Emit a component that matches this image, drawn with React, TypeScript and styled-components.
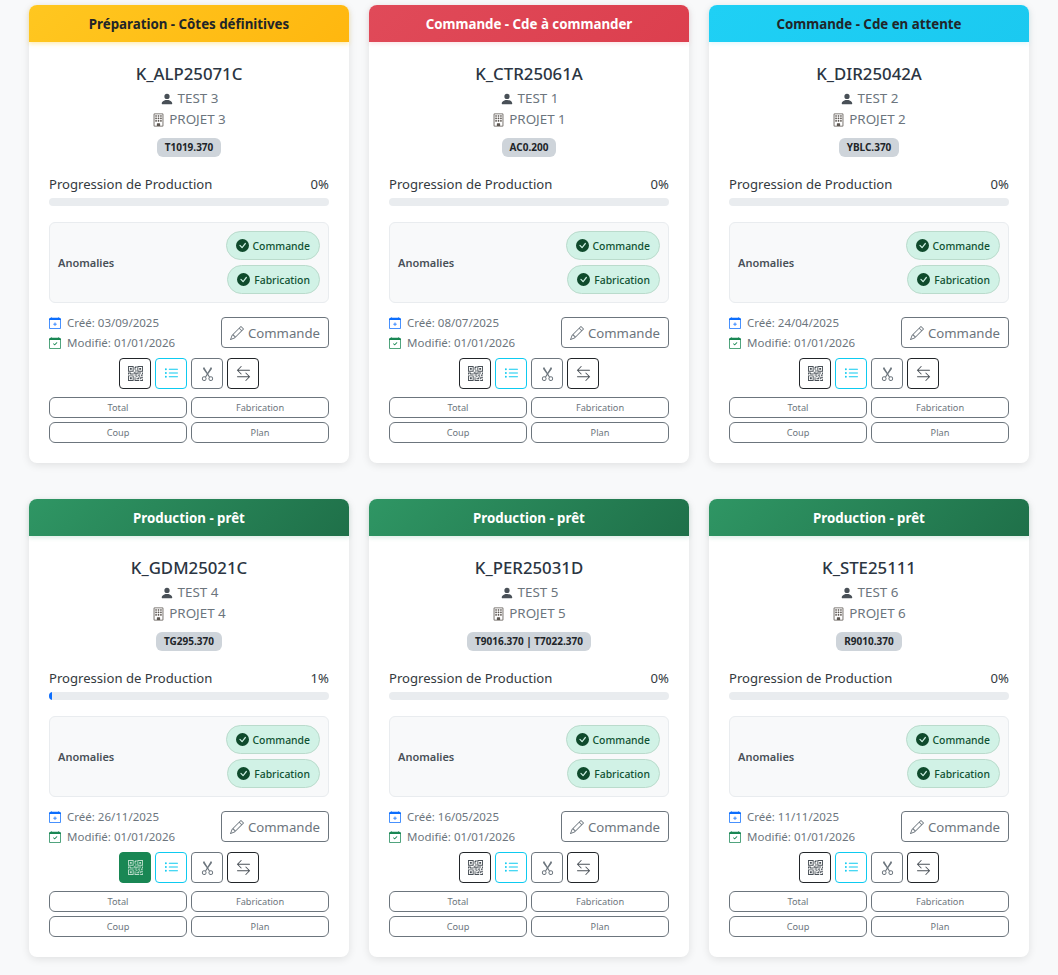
import React from "react";
import styled, { createGlobalStyle } from "styled-components";
import {
  BsPersonFill,
  BsBuilding,
  BsCheckCircleFill,
  BsCalendarPlus,
  BsCalendarCheck,
  BsPencil,
  BsQrCode,
  BsListUl,
  BsScissors,
  BsArrowLeftRight,
} from "react-icons/bs";

const Global = createGlobalStyle`
  html, body { margin: 0; padding: 0; background: #f8f9fa; }
  body { font-family: "Noto Sans", "Open Sans", sans-serif; color: #212529; }
  * { box-sizing: border-box; }
`;

const Page = styled.div`
  width: 1058px;
  height: 975px;
  overflow: hidden;
  padding: 5px 29px 0;
  display: grid;
  grid-template-columns: repeat(3, 320px);
  grid-auto-rows: 458px;
  column-gap: 20px;
  row-gap: 36px;
`;

const Card = styled.div`
  background: #fff;
  border-radius: 8px;
  box-shadow: 0 2px 8px rgba(0, 0, 0, 0.1);
  display: flex;
  flex-direction: column;
`;

type Tone = "warning" | "danger" | "info" | "success";

const tones: Record<Tone, { bg: string; fg: string; glow: string }> = {
  warning: { bg: "linear-gradient(135deg, #ffc720, #ffb70f)", fg: "#212529", glow: "rgba(255,193,7,.3)" },
  danger: { bg: "linear-gradient(135deg, #e04a59, #dc3f4e)", fg: "#fff", glow: "rgba(220,53,69,.12)" },
  info: { bg: "linear-gradient(135deg, #1fd0f5, #1bc9f0)", fg: "#212529", glow: "rgba(13,202,240,.12)" },
  success: { bg: "linear-gradient(135deg, #2f9664, #1f7049)", fg: "#fff", glow: "rgba(25,135,84,.15)" },
};

const Header = styled.div<{ $tone: Tone }>`
  height: 37px;
  border-radius: 8px 8px 0 0;
  background: ${(p) => tones[p.$tone].bg};
  color: ${(p) => tones[p.$tone].fg};
  box-shadow: 0 2px 4px ${(p) => tones[p.$tone].glow};
  display: flex;
  align-items: center;
  justify-content: center;
  font-size: 13.3px;
  font-weight: 700;
`;

const Body = styled.div`
  padding: 20px 20px 0;
  display: flex;
  flex-direction: column;
`;

const Title = styled.h5`
  margin: 0;
  height: 26px;
  line-height: 24px;
  font-size: 16.8px;
  font-weight: 500;
  text-align: center;
  color: #2b3542;
`;

const Sub = styled.div`
  height: 21px;
  line-height: 21px;
  font-size: 13.4px;
  color: #6c757d;
  display: flex;
  align-items: center;
  justify-content: center;
  gap: 4px;
`;

const PersonGlyph = styled(BsPersonFill)`
  width: 14px;
  height: 14px;
  color: #495057;
`;

const BuildingGlyph = styled(BsBuilding)`
  width: 13px;
  height: 14px;
  color: #5c5650;
`;

const TagRow = styled.div`
  display: flex;
  justify-content: center;
  margin-top: 8px;
`;

const Tag = styled.span`
  height: 19px;
  line-height: 18px;
  padding: 0 8px;
  border-radius: 6px;
  background: #ced4da;
  font-size: 10px;
  font-weight: 700;
  color: #212529;
`;

const ProgressHead = styled.div`
  margin-top: 17px;
  height: 20px;
  display: flex;
  justify-content: space-between;
  align-items: center;
  font-size: 13.1px;
  color: #343a40;
`;

const Track = styled.div`
  margin-top: 4px;
  height: 8px;
  border-radius: 4px;
  background: #e9ecef;
  overflow: hidden;
`;

const Fill = styled.div`
  height: 100%;
  background: #0d6efd;
`;

const Anomalies = styled.div`
  margin-top: 16px;
  height: 81px;
  border: 1px solid #e9ecef;
  border-radius: 6px;
  background: #f8f9fa;
  padding: 0 8px;
  display: flex;
  align-items: center;
  justify-content: space-between;
`;

const AnomLabel = styled.span`
  font-size: 11px;
  font-weight: 600;
  color: #495057;
`;

const Pills = styled.div`
  display: flex;
  flex-direction: column;
  align-items: flex-end;
  gap: 5px;
`;

const Pill = styled.span`
  height: 29px;
  padding: 0 9px;
  border-radius: 15px;
  background: #d1f2e6;
  border: 1px solid #badbcc;
  color: #0f5132;
  font-size: 10.4px;
  font-weight: 500;
  display: inline-flex;
  align-items: center;
  gap: 4px;
`;

const CheckGlyph = styled(BsCheckCircleFill)`
  width: 13px;
  height: 13px;
  color: #0f4a2c;
`;

const MetaRow = styled.div`
  margin-top: 11px;
  display: flex;
  justify-content: space-between;
  align-items: flex-start;
`;

const Dates = styled.div`
  display: flex;
  flex-direction: column;
  gap: 3px;
`;

const DateLine = styled.div`
  height: 17px;
  display: flex;
  align-items: center;
  gap: 6px;
  font-size: 11.5px;
  color: #6c757d;
`;

const PlusGlyph = styled(BsCalendarPlus)`
  width: 12px;
  height: 12px;
  color: #0d6efd;
`;

const CheckCalGlyph = styled(BsCalendarCheck)`
  width: 12px;
  height: 12px;
  color: #198754;
`;

const EditButton = styled.button`
  margin-top: 3px;
  width: 108px;
  height: 31px;
  border: 1px solid #6c757d;
  border-radius: 4px;
  background: #fff;
  color: #6c757d;
  font: inherit;
  font-size: 13.2px;
  display: flex;
  align-items: center;
  justify-content: center;
  gap: 4px;
  padding: 0;
`;

const IconRow = styled.div`
  margin-top: 7px;
  display: flex;
  justify-content: center;
  gap: 4px;
`;

type Variant = "dark" | "info" | "grey" | "green";
const variants: Record<Variant, { border: string; color: string; bg: string }> = {
  dark: { border: "#212529", color: "#495057", bg: "#fff" },
  info: { border: "#0dcaf0", color: "#0dcaf0", bg: "#fff" },
  grey: { border: "#6c757d", color: "#6c757d", bg: "#fff" },
  green: { border: "#198754", color: "#b9dcc9", bg: "#198754" },
};

const IconButton = styled.button<{ $v: Variant }>`
  width: 32px;
  height: 31px;
  border-radius: 4px;
  border: 1px solid ${(p) => variants[p.$v].border};
  background: ${(p) => variants[p.$v].bg};
  color: ${(p) => variants[p.$v].color};
  display: flex;
  align-items: center;
  justify-content: center;
  padding: 0;
  & > svg {
    width: 15px;
    height: 15px;
  }
`;

const Actions = styled.div`
  margin-top: 8px;
  display: grid;
  grid-template-columns: 1fr 1fr;
  gap: 4px;
`;

const ActionButton = styled.button`
  height: 21px;
  border: 1px solid #6c757d;
  border-radius: 6px;
  background: #fff;
  color: #6c757d;
  font: inherit;
  font-size: 9.2px;
  padding: 0;
`;

type CardData = {
  status: string;
  tone: Tone;
  code: string;
  client: string;
  project: string;
  ref: string;
  pct: number;
  created: string;
  qr?: Variant;
};

const cards: CardData[] = [
  { status: "Préparation - Côtes définitives", tone: "warning", code: "K_ALP25071C", client: "TEST 3", project: "PROJET 3", ref: "T1019.370", pct: 0, created: "03/09/2025" },
  { status: "Commande - Cde à commander", tone: "danger", code: "K_CTR25061A", client: "TEST 1", project: "PROJET 1", ref: "AC0.200", pct: 0, created: "08/07/2025" },
  { status: "Commande - Cde en attente", tone: "info", code: "K_DIR25042A", client: "TEST 2", project: "PROJET 2", ref: "YBLC.370", pct: 0, created: "24/04/2025" },
  { status: "Production - prêt", tone: "success", code: "K_GDM25021C", client: "TEST 4", project: "PROJET 4", ref: "TG295.370", pct: 1, created: "26/11/2025", qr: "green" },
  { status: "Production - prêt", tone: "success", code: "K_PER25031D", client: "TEST 5", project: "PROJET 5", ref: "T9016.370 | T7022.370", pct: 0, created: "16/05/2025" },
  { status: "Production - prêt", tone: "success", code: "K_STE25111", client: "TEST 6", project: "PROJET 6", ref: "R9010.370", pct: 0, created: "11/11/2025" },
];

function ProjectCard({ c }: { c: CardData }) {
  return (
    <Card>
      <Header $tone={c.tone}>{c.status}</Header>
      <Body>
        <Title>{c.code}</Title>
        <Sub>
          <PersonGlyph />
          {c.client}
        </Sub>
        <Sub>
          <BuildingGlyph />
          {c.project}
        </Sub>
        <TagRow>
          <Tag>{c.ref}</Tag>
        </TagRow>
        <ProgressHead>
          <span>Progression de Production</span>
          <span>{c.pct}%</span>
        </ProgressHead>
        <Track>
          <Fill style={{ width: `${c.pct}%` }} />
        </Track>
        <Anomalies>
          <AnomLabel>Anomalies</AnomLabel>
          <Pills>
            <Pill>
              <CheckGlyph />
              Commande
            </Pill>
            <Pill>
              <CheckGlyph />
              Fabrication
            </Pill>
          </Pills>
        </Anomalies>
        <MetaRow>
          <Dates>
            <DateLine>
              <PlusGlyph />
              Créé: {c.created}
            </DateLine>
            <DateLine>
              <CheckCalGlyph />
              Modifié: 01/01/2026
            </DateLine>
          </Dates>
          <EditButton>
            <BsPencil size={14} />
            Commande
          </EditButton>
        </MetaRow>
        <IconRow>
          <IconButton $v={c.qr ?? "dark"}>
            <BsQrCode />
          </IconButton>
          <IconButton $v="info">
            <BsListUl />
          </IconButton>
          <IconButton $v="grey">
            <BsScissors />
          </IconButton>
          <IconButton $v="dark">
            <BsArrowLeftRight />
          </IconButton>
        </IconRow>
        <Actions>
          <ActionButton>Total</ActionButton>
          <ActionButton>Fabrication</ActionButton>
          <ActionButton>Coup</ActionButton>
          <ActionButton>Plan</ActionButton>
        </Actions>
      </Body>
    </Card>
  );
}

export default function App() {
  return (
    <>
      <Global />
      <Page>
        {cards.map((c) => (
          <ProjectCard key={c.code} c={c} />
        ))}
      </Page>
    </>
  );
}
